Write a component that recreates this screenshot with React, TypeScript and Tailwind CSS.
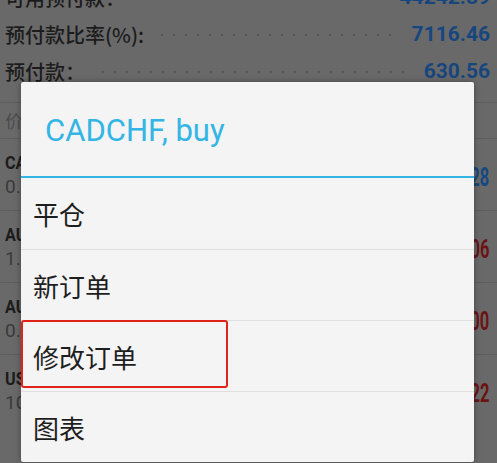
const SUMMARY = [
  { label: "可用预付款：", value: "44242.89" },
  { label: "预付款比率(%):", value: "7116.46" },
  { label: "预付款：", value: "630.56" },
];

const POSITIONS = [
  { symbol: "CADCHF, buy", sub: "0.10 / 0.85612", value: "0.28", tone: "text-[#18487f]" },
  { symbol: "AUDUSD, sell", sub: "1.00 / 0.75201", value: "-12.06", tone: "text-[#6a1414]" },
  { symbol: "AUDJPY, sell", sub: "0.50 / 84.115", value: "-3.00", tone: "text-[#6a1414]" },
  { symbol: "USDJPY, sell", sub: "10.00 / 111.42", value: "-44.22", tone: "text-[#6a1414]" },
];

const ACTIONS = ["平仓", "新订单", "修改订单", "图表"];

const cjk = "font-['Noto_Sans_CJK_SC','Noto_Sans',sans-serif]";

function Leader() {
  return (
    <div className="mx-3 h-[4px] flex-1 self-center bg-[radial-gradient(circle,#565656_1.2px,transparent_1.6px)] bg-[length:12px_4px]" />
  );
}

export default function App() {
  return (
    <div className={`relative h-[463px] w-[497px] overflow-hidden bg-[#696969] ${cjk}`}>
      {/* Dimmed trade screen */}
      <div className="-mt-[21px] px-[5px] pr-[7px]">
        {SUMMARY.map((row) => (
          <div key={row.label} className="flex h-[37px] items-center">
            <span className="text-[20px] font-medium text-[#1c1c1c]">{row.label}</span>
            <Leader />
            <span className="font-['Roboto',sans-serif] text-[21px] font-bold text-[#17467e]">{row.value}</span>
          </div>
        ))}
      </div>
      <div className="mt-[12px] border-t border-[#5d5d5d]">
        <div className="flex h-[35px] items-center px-[5px] text-[18px] text-[#4c4c4c]">价格</div>
        {POSITIONS.map((p) => (
          <div key={p.symbol} className="flex h-[72px] items-center justify-between border-t border-[#5d5d5d] px-[5px] pr-[8px]">
            <div className="flex flex-col font-['Roboto',sans-serif] leading-[24px]">
              <span className="origin-left scale-x-[0.85] text-[19px] font-bold text-[#1c1c1c]">{p.symbol}</span>
              <span className="text-[19px] text-[#3a3a3a]">{p.sub}</span>
            </div>
            <span className={`mt-[6px] origin-right scale-x-[0.66] font-['Roboto',sans-serif] text-[25px] font-bold ${p.tone}`}>{p.value}</span>
          </div>
        ))}
      </div>

      {/* Context dialog */}
      <div className="absolute left-[21px] top-[82px] w-[453px] rounded-[2px] bg-[#f4f4f4] shadow-[0_0_6px_rgba(0,0,0,0.35)]">
        <div className="flex h-[94px] items-center pl-[24px] pt-[4px] font-['Roboto',sans-serif] text-[31px] text-[#33b5e5]">
          CADCHF, buy
        </div>
        <div className="h-[2px] bg-[#33b5e5]" />
        {ACTIONS.map((a, i) => (
          <div
            key={a}
            className={`relative flex h-[71px] items-center pl-[12px] text-[26px] text-[#1e1e1e] ${i > 0 ? "border-t border-[#dedede]" : ""}`}
          >
            {a}
            {a === "修改订单" && (
              <div className="absolute left-0 top-[-1px] h-[68px] w-[207px] rounded-[3px] border-2 border-[#e2231a]" />
            )}
          </div>
        ))}
      </div>
    </div>
  );
}
